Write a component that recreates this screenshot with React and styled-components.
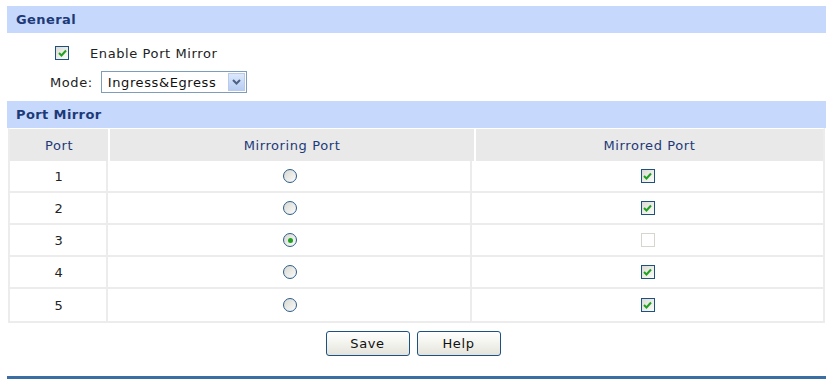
import React from 'react'
import styled, { createGlobalStyle } from 'styled-components'

const GlobalStyle = createGlobalStyle`
  body {
    margin: 0;
    background: #fff;
    font-family: "DejaVu Sans", Verdana, sans-serif;
    font-size: 13px;
    letter-spacing: 0.6px;
    color: #222;
  }
`;

const Page = styled.div`
  width: 819px;
  padding: 6px 0 0 7px;
`;

const SectionTitle = styled.div`
  height: 27px;
  line-height: 27px;
  background: #c6d9fc;
  color: #1d3a78;
  font-weight: bold;
  letter-spacing: 0.4px;
  padding-left: 9px;
  box-sizing: border-box;
`;

const General = styled.div`
  padding: 10px 0 8px 0;
  display: flex;
  flex-direction: column;
  gap: 8px;
`;

const Line = styled.div`
  display: flex;
  align-items: center;
  height: ${p => p.h || 20}px;
  padding-left: ${p => p.pad || 0}px;
  gap: ${p => p.gap || 0}px;
`;

const Select = styled.div`
  display: flex;
  align-items: center;
  width: 146px;
  height: 22px;
  border: 1px solid #7f9db9;
  box-sizing: border-box;
  padding: 1px;
  background: #fff;
`;

const SelectText = styled.span`
  flex: 1;
  padding-left: 5px;
  color: #111;
  white-space: nowrap;
`;

const Arrow = styled.span`
  width: 17px;
  height: 18px;
  background: linear-gradient(#dce8fc, #b7cdf3);
  border: 1px solid #b9cbea;
  box-sizing: border-box;
  display: flex;
  align-items: center;
  justify-content: center;
`;

const Table = styled.div`
  width: 817px;
  margin-left: 1px;
  border: 2px solid #ececec;
  border-top: 1px solid #fff;
  box-sizing: border-box;
`;

const Row = styled.div`
  display: grid;
  grid-template-columns: 98px 364px 1fr;
  column-gap: ${p => (p.head ? 2 : 0)}px;
  height: 32px;
  box-sizing: border-box;
  border-bottom: ${p => (p.head || p.last ? 0 : 2)}px solid #ececec;
`;

const Cell = styled.div`
  display: flex;
  align-items: center;
  justify-content: center;
  background: ${p => (p.head ? '#e9e9e9' : '#fff')};
  color: ${p => (p.head ? '#1d3a78' : '#222')};
  border-left: ${p => (p.divider ? '2px solid #ececec' : 0)};
  margin-left: ${p => (p.divider ? '-2px' : 0)};
`;

const Box = styled.span`
  width: 14px;
  height: 14px;
  box-sizing: border-box;
  border: 1px solid ${p => (p.off ? '#d6d6ce' : '#1c5180')};
  background: ${p => (p.off ? '#fff' : 'linear-gradient(135deg, #dcdcd6, #fbfbf9)')};
  display: inline-flex;
  align-items: center;
  justify-content: center;
`;

const Radio = styled.span`
  width: 14px;
  height: 14px;
  box-sizing: border-box;
  border-radius: 50%;
  border: 1px solid #2c5b8c;
  background: linear-gradient(135deg, #d8d8d2, #fbfbf9);
  display: inline-flex;
  align-items: center;
  justify-content: center;
`;

const Dot = styled.span`
  width: 5px;
  height: 5px;
  border-radius: 50%;
  background: #21a121;
`;

const Buttons = styled.div`
  display: flex;
  justify-content: center;
  gap: 7px;
  padding: 8px 0 0 0;
  margin-left: -7px;
`;

const Button = styled.button`
  width: 84px;
  height: 25px;
  border: 1px solid #1c5180;
  border-radius: 3px;
  background: linear-gradient(#ffffff, #f0f0ea 60%, #e3e3dc);
  font-family: "DejaVu Sans", Verdana, sans-serif;
  font-size: 13px;
  letter-spacing: 0.6px;
  color: #111;
  padding: 0;
`;

const Rule = styled.div`
  width: 819px;
  height: 3px;
  margin-top: 20px;
  background: #3b6fa3;
`;

function Check({ on }) {
  return (
    <Box off={!on}>
      {on && (
        <svg width="9" height="8" viewBox="0 0 9 8">
          <path d="M1 4 L3.5 6.5 L8 1.5" stroke="#21a121" strokeWidth="2" fill="none" />
        </svg>
      )}
    </Box>
  )
}

const ports = [
  { id: 1, mirroring: false, mirrored: true },
  { id: 2, mirroring: false, mirrored: true },
  { id: 3, mirroring: true, mirrored: false },
  { id: 4, mirroring: false, mirrored: true },
  { id: 5, mirroring: false, mirrored: true }
]

export default function App() {
  return (
    <Page>
      <GlobalStyle />
      <SectionTitle>General</SectionTitle>
      <General>
        <Line pad={48} gap={21}>
          <Check on />
          <span>Enable Port Mirror</span>
        </Line>
        <Line h={22} pad={43} gap={8}>
          <span>Mode:</span>
          <Select>
            <SelectText>Ingress&amp;Egress</SelectText>
            <Arrow>
              <svg width="9" height="6" viewBox="0 0 9 6">
                <path d="M1 1 L4.5 4.5 L8 1" stroke="#4d6185" strokeWidth="2" fill="none" />
              </svg>
            </Arrow>
          </Select>
        </Line>
      </General>
      <SectionTitle>Port Mirror</SectionTitle>
      <Table>
        <Row head>
          <Cell head>Port</Cell>
          <Cell head>Mirroring Port</Cell>
          <Cell head>Mirrored Port</Cell>
        </Row>
        {ports.map((p, i) => (
          <Row key={p.id} last={i === ports.length - 1}>
            <Cell>{p.id}</Cell>
            <Cell divider>
              <Radio>{p.mirroring && <Dot />}</Radio>
            </Cell>
            <Cell divider>
              <Check on={p.mirrored} />
            </Cell>
          </Row>
        ))}
      </Table>
      <Buttons>
        <Button>Save</Button>
        <Button>Help</Button>
      </Buttons>
      <Rule />
    </Page>
  )
}
